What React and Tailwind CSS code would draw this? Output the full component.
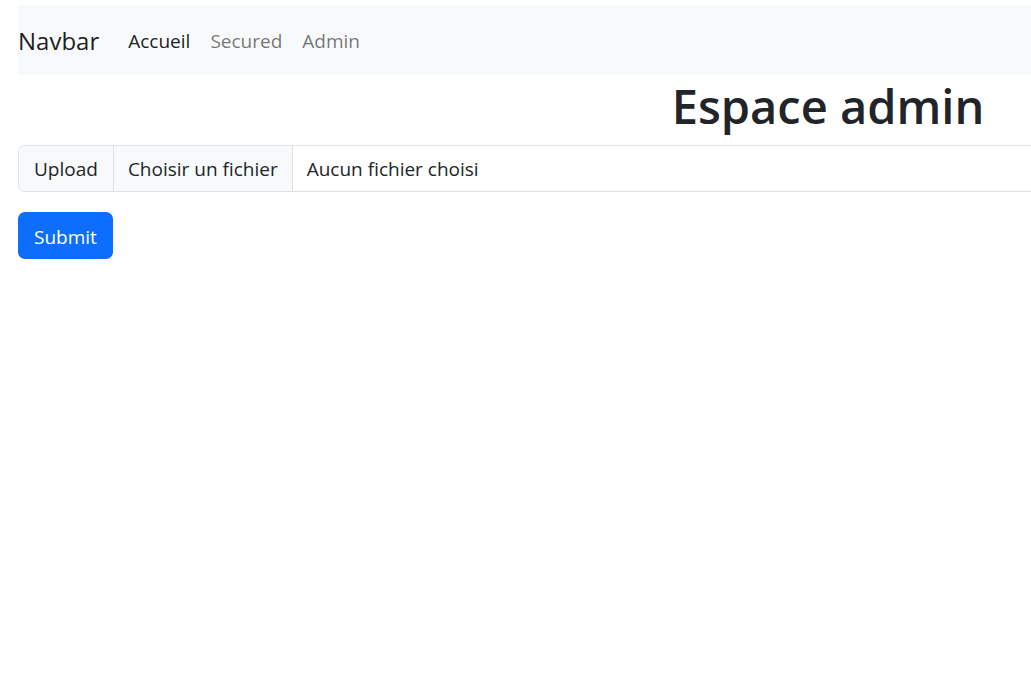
export default function App() {
  return (
    <div className="min-h-screen w-full overflow-hidden bg-white" style={{ fontFamily: '"Open Sans", "Noto Sans", sans-serif' }}>
      <div className="ml-[18px] mt-[5px] w-[1620px] text-[#212529]">
        <nav className="flex h-[70px] items-center bg-[#f8f9fa] pt-[2px]">
          <a className="mr-[19px] text-[24px] leading-none text-black/90">Navbar</a>
          <ul className="flex items-center text-[19px]">
            <li className="px-[10px] text-black/90">Accueil</li>
            <li className="px-[10px] text-black/55">Secured</li>
            <li className="px-[10px] text-black/55">Admin</li>
          </ul>
        </nav>

        <h1 className="mb-[10px] pt-[3px] text-center text-[47px] font-semibold leading-[57px]">Espace admin</h1>

        <form>
          <div className="flex h-[47px] w-full items-stretch rounded-[7px] border border-[#dee2e6] pt-[2px] text-[19px]">
            <label className="-mt-[2px] flex items-center rounded-l-[7px] border-r border-[#dee2e6] bg-[#f8f9fa] px-[15px] pt-[2px]">Upload</label>
            <span className="-mt-[2px] flex items-center border-r border-[#dee2e6] bg-[#f8f9fa] px-[14px] pt-[2px]">Choisir un fichier</span>
            <span className="flex items-center px-[14px]">Aucun fichier choisi</span>
          </div>
          <button type="button" className="mt-[20px] h-[47px] rounded-[7px] bg-[#0d6efd] px-[16px] pt-[3px] text-[19px] text-white">
            Submit
          </button>
        </form>
      </div>
    </div>
  );
}
